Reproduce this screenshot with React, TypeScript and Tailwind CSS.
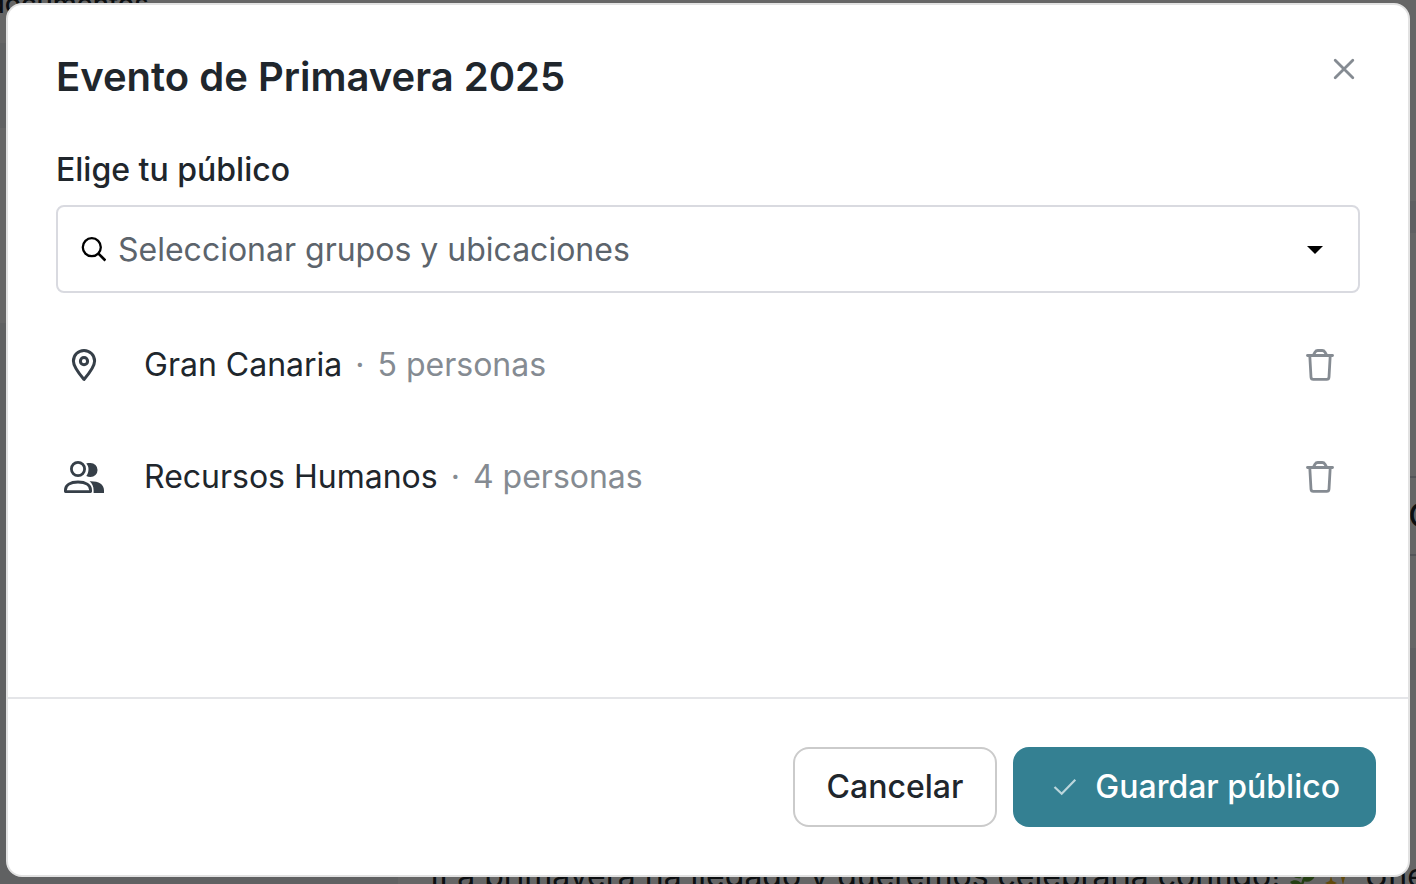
import { useState } from "react";

interface Audience {
  id: string;
  name: string;
  people: number;
  kind: "location" | "group";
}

const initialAudience: Audience[] = [
  { id: "gran-canaria", name: "Gran Canaria", people: 5, kind: "location" },
  { id: "rrhh", name: "Recursos Humanos", people: 4, kind: "group" },
];

function CloseIcon() {
  return (
    <svg width="24" height="24" viewBox="0 0 24 24" fill="none" stroke="currentColor" strokeWidth="2.8" strokeLinecap="round">
      <path d="M3.2 3.2 20.8 20.8M20.8 3.2 3.2 20.8" />
    </svg>
  );
}

function SearchIcon() {
  return (
    <svg width="26" height="26" viewBox="0 0 26 26" fill="none" stroke="currentColor" strokeWidth="2.3">
      <circle cx="11.8" cy="10.2" r="9" />
      <path d="m18.2 16.4 7.2 7.2" strokeWidth="2.7" />
    </svg>
  );
}

function PinIcon() {
  return (
    <svg width="40" height="40" viewBox="0 0 40 40" fill="none" stroke="currentColor" strokeWidth="3" strokeLinejoin="round">
      <path d="M20 34.4C16.2 30 9.4 21.6 9.4 16a10.6 10.6 0 0 1 21.2 0c0 5.6-6.8 14-10.6 18.4Z" />
      <circle cx="20" cy="16.2" r="3.6" />
    </svg>
  );
}

function PeopleIcon() {
  return (
    <svg width="40" height="40" viewBox="0 0 40 40" fill="none">
      <circle cx="14" cy="12" r="6.6" stroke="currentColor" strokeWidth="2.8" />
      <path
        d="M1.4 34.6v-1.4c0-5 4.8-8.2 12.6-8.2s12.6 3.2 12.6 8.2v1.4Z"
        stroke="currentColor"
        strokeWidth="2.8"
        strokeLinejoin="round"
      />
      <path d="M22.2 6.4C23.4 6 24.6 5.9 26.5 5.9a7 7 0 0 1 0 14.1c-1.7 0-3-.3-4.2-.9 1.5-1.9 2.2-4.3 2.2-7s-.8-4-2.3-5.7Z" fill="currentColor" />
      <path d="M25.6 24.2c8.4-.4 14.4 2.8 14.4 9V36H29.6v-2.8c0-3.8-1.4-6.8-4-9Z" fill="currentColor" />
    </svg>
  );
}

function TrashIcon() {
  return (
    <svg width="28" height="32" viewBox="0 0 28 32" fill="none" stroke="currentColor" strokeWidth="2.8" strokeLinecap="round" strokeLinejoin="round">
      <path d="M1.5 6.5h25" />
      <path d="M7.5 6 9 3.2c.7-1.2 1.5-1.7 2.8-1.7h4.4c1.3 0 2.1.5 2.8 1.7L20.5 6" />
      <path d="m3.8 7 1.2 21.2c.1 1.4.9 2.2 2.3 2.2h13.4c1.4 0 2.2-.8 2.3-2.2L24.2 7" />
    </svg>
  );
}

function CheckIcon() {
  return (
    <svg width="24" height="24" viewBox="0 0 24 24" fill="none" stroke="currentColor" strokeWidth="2.2">
      <path d="m1.5 12 7.2 6.8L22.3 4.8" />
    </svg>
  );
}

function HerbIcon() {
  return (
    <svg className="shrink-0" width="28" height="28" viewBox="0 0 28 28" fill="#5c9e31">
      <path d="M12 27C13 18 17 10 24 4l1 1C19 12 16 19 14 27Z" />
      <path d="M1 9c6-1 11 2 12 7C7 17 3 14 1 9ZM2 20c4-3 9-2 12 2-5 3-9 2-12-2ZM15 19c2-5 7-7 12-5-2 5-7 7-12 5Z" />
    </svg>
  );
}

function SparklesIcon() {
  return (
    <svg className="shrink-0" width="28" height="28" viewBox="0 0 28 28" fill="#f5b921">
      <path d="m19 1 2 8 6 3-6 3-2 8-2-8-6-3 6-3ZM7 14l1.5 5L13 21l-4.5 2L7 27l-1.5-4L1 21l4.5-2Z" />
    </svg>
  );
}

// Dimmed page that stays behind the dialog
function PageBehind() {
  return (
    <div aria-hidden="true" className="absolute inset-0 flex overflow-hidden bg-white text-[#20262c]">
      <div className="flex w-[398px] shrink-0 flex-col bg-[#f1f2f5]">
        <div className="h-[43px] bg-white">
          <p className="-mt-3.5 -ml-3 text-[27px] leading-9 font-medium">documentos</p>
        </div>
        <div className="h-[85px]" />
        <div className="h-[195px] bg-white" />
      </div>
      <div className="flex min-w-0 flex-1 flex-col">
        <div className="h-[201px]" />
        <div className="h-8 bg-[#eff1f4]" />
        <div className="flex-1" />
        <div className="flex h-20 items-center justify-end border-y-2 border-gray-300">
          <span className="-mr-4 text-[32px] font-medium">C</span>
        </div>
        <div className="h-[92px]" />
        <div className="h-8 bg-[#eff1f4]" />
        <div className="h-44" />
        <p className="-mb-3 flex items-center gap-2 pl-8 text-[32px] leading-10 whitespace-nowrap">
          ¡La primavera ha llegado y queremos celebrarla contigo!
          <HerbIcon />
          <SparklesIcon />
          <span className="ml-1">Únete</span>
        </p>
      </div>
    </div>
  );
}

export default function App() {
  const [audience, setAudience] = useState(initialAudience);
  const [query, setQuery] = useState("");

  function removeAudience(id: string) {
    setAudience(audience.filter((item) => item.id !== id));
  }

  return (
    <div className="relative flex min-h-screen font-['Inter','Liberation_Sans',sans-serif]">
      <PageBehind />
      <div className="relative flex flex-1 bg-black/60 px-1.5 pt-[3px] pb-[7px]">
        <div
          role="dialog"
          aria-modal="true"
          aria-labelledby="dialog-title"
          className="flex flex-1 flex-col rounded-2xl border-2 border-[#e2e2e2] bg-white text-[#20262c]"
        >
          <header className="flex items-start justify-between px-12 pt-12">
            <h1 id="dialog-title" className="text-[40px] leading-[48px] font-semibold">
              Evento de Primavera 2025
            </h1>
            <button type="button" aria-label="Cerrar" className="mt-1 mr-1 cursor-pointer text-[#858b92]">
              <CloseIcon />
            </button>
          </header>

          <div className="flex-1 px-12 pt-[45px]">
            <label htmlFor="audience" className="block text-[32px] leading-[48px] font-medium">
              Elige tu público
            </label>
            <div className="mt-[11px] flex h-[88px] items-center gap-3 rounded-lg border-2 border-[#d9dae0] pt-px pr-[35px] pl-[22px] text-black">
              <SearchIcon />
              <input
                id="audience"
                type="text"
                value={query}
                onChange={(e) => setQuery(e.target.value)}
                placeholder="Seleccionar grupos y ubicaciones"
                className="h-full min-w-0 flex-1 text-[32px] outline-none placeholder:text-[#5c646c]"
              />
              <button type="button" aria-label="Abrir lista" className="cursor-pointer">
                <svg width="16" height="8" viewBox="0 0 16 8" fill="currentColor">
                  <path d="M0 0h16L8 8Z" />
                </svg>
              </button>
            </div>

            <ul className="mt-4">
              {audience.map((item) => (
                <li key={item.id} className="flex h-28 items-center pr-[26px] pl-2">
                  <span className="text-[#363f48]">{item.kind === "location" ? <PinIcon /> : <PeopleIcon />}</span>
                  <p className="ml-10 flex-1 text-[32px] leading-[48px]">
                    {item.name}
                    <span className="text-[#858b92]">
                      <span className="mx-[13px]">·</span>
                      {item.people} personas
                    </span>
                  </p>
                  <button
                    type="button"
                    aria-label={`Eliminar ${item.name}`}
                    onClick={() => removeAudience(item.id)}
                    className="cursor-pointer text-[#858b92]"
                  >
                    <TrashIcon />
                  </button>
                </li>
              ))}
            </ul>
          </div>

          <footer className="flex justify-end gap-4 border-t-2 border-[#e4e5e8] px-8 py-12 text-[32px] leading-[48px] font-medium">
            <button type="button" className="h-20 cursor-pointer rounded-2xl border-2 border-[#cbcbcb] px-8">
              Cancelar
            </button>
            <button type="button" className="flex h-20 cursor-pointer items-center gap-[18px] rounded-2xl bg-[#348092] pr-9 pl-10 text-white">
              <span className="text-[#bcd6dc]">
                <CheckIcon />
              </span>
              Guardar público
            </button>
          </footer>
        </div>
      </div>
    </div>
  );
}
